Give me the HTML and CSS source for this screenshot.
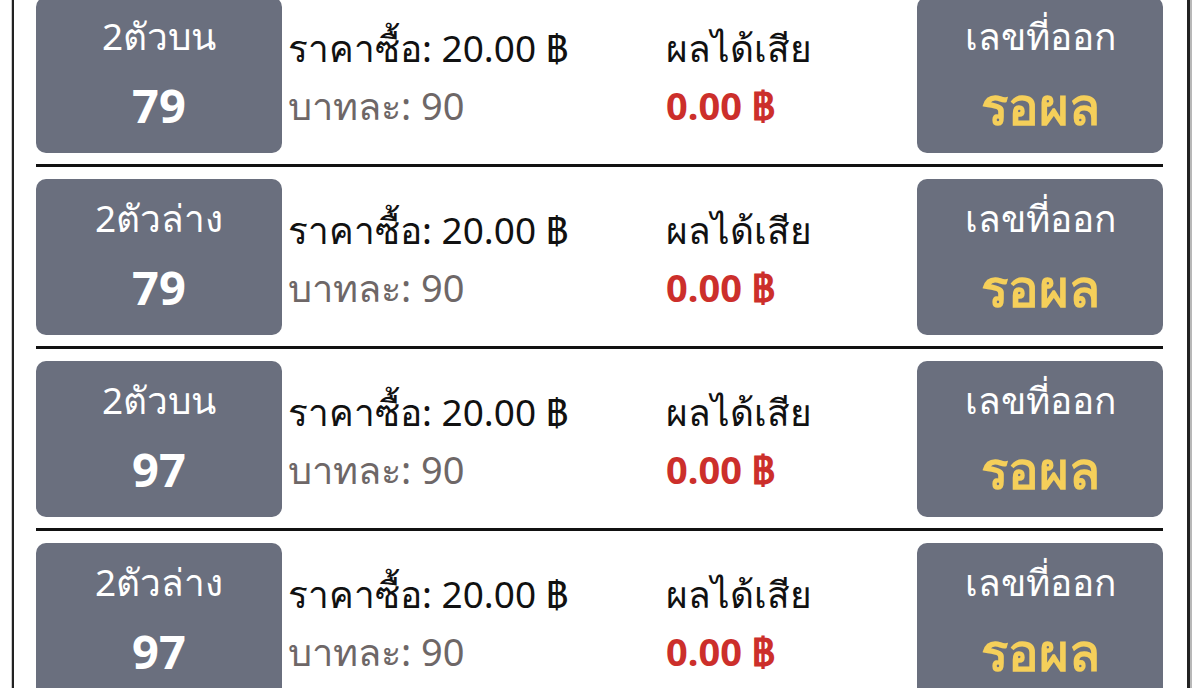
FILE: index.html
```html
<!DOCTYPE html>
<html lang="th">
<head>
    <meta charset="UTF-8">
    <meta name="viewport" content="width=device-width, initial-scale=1.0">
    <title>รายการโพย</title>
    <link rel="stylesheet" href="styles.css">
</head>
<body>
    <section class="bill-list">
        <div class="bill-row">
            <div class="type-box">
                <p class="type-name">2ตัวบน</p>
                <p class="type-number">79</p>
            </div>
            <div class="price-col">
                <p class="price">ราคาซื้อ: 20.00 ฿</p>
                <p class="rate">บาทละ: 90</p>
            </div>
            <div class="result-col">
                <p class="result-title">ผลได้เสีย</p>
                <p class="result-value">0.00 ฿</p>
            </div>
            <div class="draw-box">
                <p class="draw-title">เลขที่ออก</p>
                <p class="draw-status">รอผล</p>
            </div>
        </div>

        <div class="bill-row">
            <div class="type-box">
                <p class="type-name">2ตัวล่าง</p>
                <p class="type-number">79</p>
            </div>
            <div class="price-col">
                <p class="price">ราคาซื้อ: 20.00 ฿</p>
                <p class="rate">บาทละ: 90</p>
            </div>
            <div class="result-col">
                <p class="result-title">ผลได้เสีย</p>
                <p class="result-value">0.00 ฿</p>
            </div>
            <div class="draw-box">
                <p class="draw-title">เลขที่ออก</p>
                <p class="draw-status">รอผล</p>
            </div>
        </div>

        <div class="bill-row">
            <div class="type-box">
                <p class="type-name">2ตัวบน</p>
                <p class="type-number">97</p>
            </div>
            <div class="price-col">
                <p class="price">ราคาซื้อ: 20.00 ฿</p>
                <p class="rate">บาทละ: 90</p>
            </div>
            <div class="result-col">
                <p class="result-title">ผลได้เสีย</p>
                <p class="result-value">0.00 ฿</p>
            </div>
            <div class="draw-box">
                <p class="draw-title">เลขที่ออก</p>
                <p class="draw-status">รอผล</p>
            </div>
        </div>

        <div class="bill-row">
            <div class="type-box">
                <p class="type-name">2ตัวล่าง</p>
                <p class="type-number">97</p>
            </div>
            <div class="price-col">
                <p class="price">ราคาซื้อ: 20.00 ฿</p>
                <p class="rate">บาทละ: 90</p>
            </div>
            <div class="result-col">
                <p class="result-title">ผลได้เสีย</p>
                <p class="result-value">0.00 ฿</p>
            </div>
            <div class="draw-box">
                <p class="draw-title">เลขที่ออก</p>
                <p class="draw-status">รอผล</p>
            </div>
        </div>
    </section>
</body>
</html>
```

FILE: styles.css
```css
* {
    margin: 0;
    padding: 0;
    box-sizing: border-box;
    font-family: 'Noto Sans', sans-serif;
}

body {
    background-color: #fff;
    overflow: hidden;
}

.bill-list {
    width: 1178px;
    margin: -15px 0 0 12px;
    padding: 0 24px 0 22px;
    border-left: 2px solid #222;
    border-right: 3px solid #222;
    box-shadow: 2px 0 0 #b8b8b8, -1px 0 0 #ccc;
}

.bill-row {
    display: flex;
    align-items: flex-start;
    padding: 12px 0 11px;
    border-bottom: 3px solid #111;
}

.type-box,
.draw-box {
    width: 246px;
    height: 156px;
    flex-shrink: 0;
    background: #6a6f7e;
    border-radius: 10px;
    color: #fff;
    text-align: center;
    padding-top: 12px;
}

.type-name,
.draw-title {
    font-size: 37px;
    line-height: 54px;
}

.type-number {
    margin-top: 12px;
    font-size: 47px;
    font-weight: 700;
    line-height: 60px;
}

.draw-status {
    margin-top: 12px;
    font-size: 51px;
    font-weight: 700;
    line-height: 60px;
    color: #f5cf5a;
}

.price-col {
    width: 384px;
    padding: 26px 0 0 6px;
}

.result-col {
    flex: 1;
    padding-top: 26px;
}

.price,
.result-title {
    font-size: 37px;
    line-height: 50px;
    color: #111;
}

.rate {
    font-size: 38px;
    line-height: 64px;
    color: #6e6767;
}

.result-value {
    font-size: 38px;
    font-weight: 700;
    line-height: 64px;
    color: #cc2f2b;
}
```
